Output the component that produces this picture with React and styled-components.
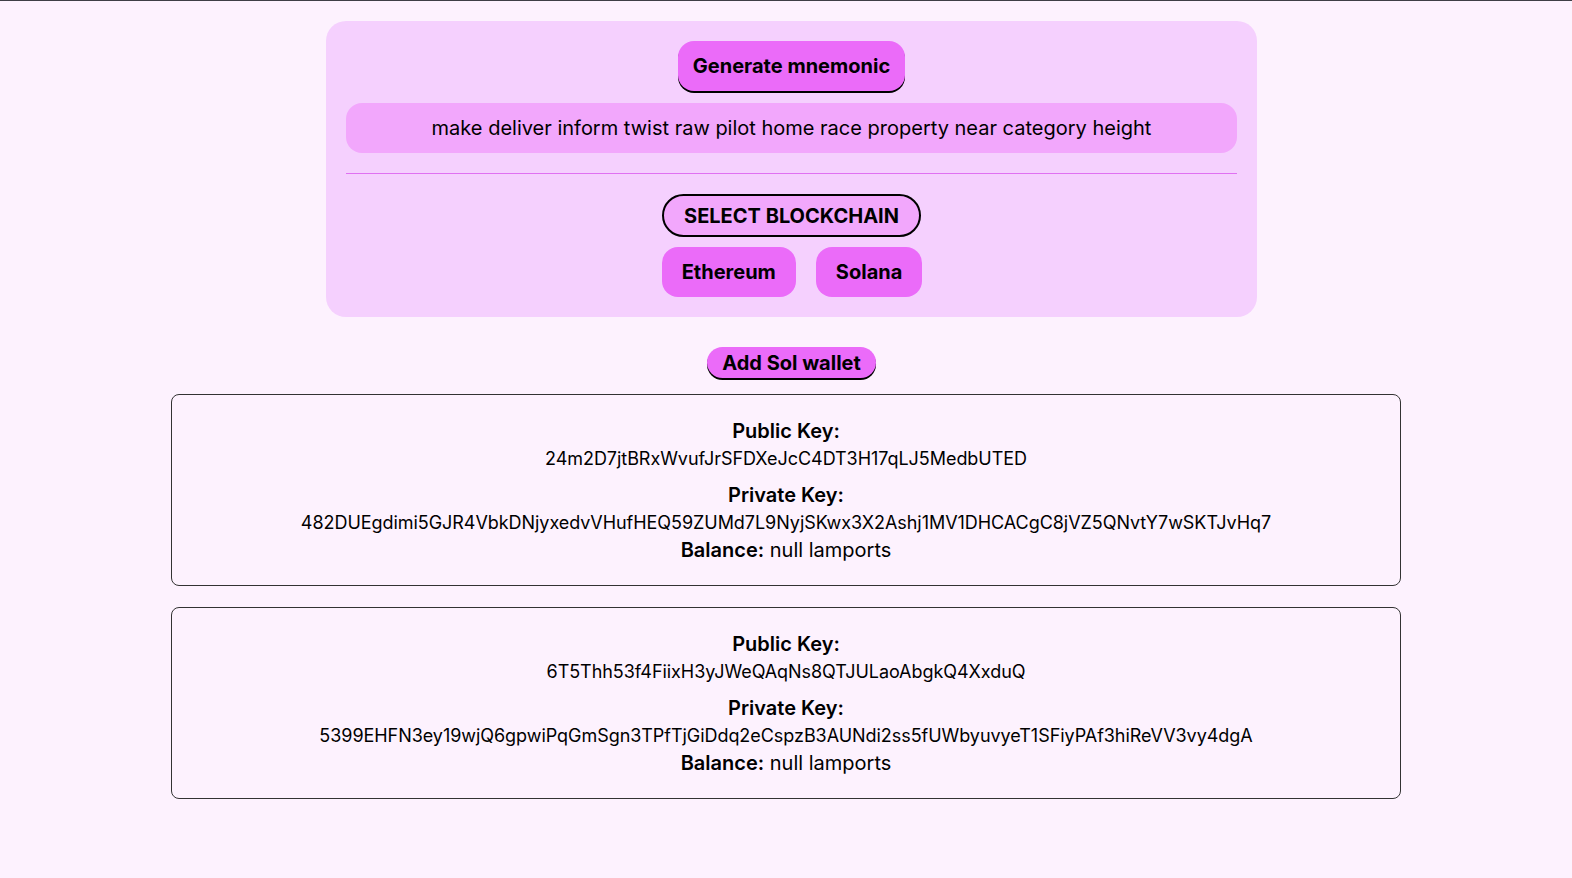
import React from "react";
import styled, { createGlobalStyle } from "styled-components";

const GlobalStyle = createGlobalStyle`
  html, body {
    margin: 0;
    padding: 0;
    background: #fdf2fe;
    font-family: Inter, "Noto Sans", sans-serif;
    color: #000;
  }
`;

const Page = styled.div`
  min-height: 878px;
  box-sizing: border-box;
  border-top: 1px solid #3f3f46;
  display: flex;
  flex-direction: column;
  align-items: center;
  padding-top: 20px;
`;

const Panel = styled.section`
  width: 931px;
  box-sizing: border-box;
  margin-left: 11px;
  padding: 20px;
  border-radius: 20px;
  background: #f5d0fe;
  display: flex;
  flex-direction: column;
  align-items: center;
`;

const PillButton = styled.button`
  font-family: inherit;
  font-weight: 700;
  font-size: 20px;
  color: #000;
  background: #eb6bf9;
  border: none;
  border-radius: ${(p) => p.$radius || "16px"};
  height: ${(p) => p.$height || "50px"};
  padding: 0 ${(p) => p.$padX || "20px"};
  box-shadow: ${(p) => (p.$shadow ? "0 2px 0 #000" : "none")};
  cursor: pointer;
`;

const AddButton = styled(PillButton)`
  margin-left: 11px;
  margin-bottom: -5px;
`;

const Mnemonic = styled.div`
  align-self: stretch;
  margin-top: 12px;
  height: 50px;
  border-radius: 16px;
  background: #f2a7fc;
  display: flex;
  align-items: center;
  justify-content: center;
  font-size: 20px;
`;

const Divider = styled.hr`
  align-self: stretch;
  border: none;
  border-top: 1px solid #e070f2;
  margin: 20px 0 20px;
`;

const SelectLabel = styled.div`
  height: 43px;
  box-sizing: border-box;
  padding: 0 20px;
  border: 2px solid #000;
  border-radius: 999px;
  background: #f2a7fc;
  display: flex;
  align-items: center;
  font-weight: 700;
  font-size: 20px;
`;

const ChainRow = styled.div`
  display: flex;
  gap: 20px;
  margin-top: 10px;
  margin-left: 1px;
`;

const WalletList = styled.div`
  margin-top: 30px;
  display: flex;
  flex-direction: column;
  align-items: center;
  gap: 21px;
`;

const WalletCard = styled.div`
  width: 1230px;
  height: 192px;
  box-sizing: border-box;
  border: 1px solid #333;
  border-radius: 8px;
  display: flex;
  flex-direction: column;
  align-items: center;
  padding-top: 22px;
`;

const Label = styled.div`
  font-weight: 600;
  font-size: 20px;
  line-height: 28px;
`;

const KeyText = styled.div`
  font-size: 18px;
  line-height: 28px;
  letter-spacing: -0.05px;
  margin-bottom: 8px;
`;

const Balance = styled.div`
  font-size: 20px;
  line-height: 28px;
  margin-top: -9px;
  b {
    font-weight: 600;
  }
`;

const wallets = [
  {
    pub: "24m2D7jtBRxWvufJrSFDXeJcC4DT3H17qLJ5MedbUTED",
    priv: "482DUEgdimi5GJR4VbkDNjyxedvVHufHEQ59ZUMd7L9NyjSKwx3X2Ashj1MV1DHCACgC8jVZ5QNvtY7wSKTJvHq7",
  },
  {
    pub: "6T5Thh53f4FiixH3yJWeQAqNs8QTJULaoAbgkQ4XxduQ",
    priv: "5399EHFN3ey19wjQ6gpwiPqGmSgn3TPfTjGiDdq2eCspzB3AUNdi2ss5fUWbyuvyeT1SFiyPAf3hiReVV3vy4dgA",
  },
];

export default function App() {
  return (
    <>
      <GlobalStyle />
      <Page>
        <Panel>
          <PillButton $shadow $height="50px" $padX="15px">
            Generate mnemonic
          </PillButton>
          <Mnemonic>
            make deliver inform twist raw pilot home race property near category height
          </Mnemonic>
          <Divider />
          <SelectLabel>SELECT BLOCKCHAIN</SelectLabel>
          <ChainRow>
            <PillButton>Ethereum</PillButton>
            <PillButton>Solana</PillButton>
          </ChainRow>
        </Panel>
        <WalletList>
          <AddButton $shadow $height="31px" $radius="999px" $padX="15px">
            Add Sol wallet
          </AddButton>
          {wallets.map((w) => (
            <WalletCard key={w.pub}>
              <Label>Public Key:</Label>
              <KeyText>{w.pub}</KeyText>
              <Label>Private Key:</Label>
              <KeyText>{w.priv}</KeyText>
              <Balance>
                <b>Balance:</b> null lamports
              </Balance>
            </WalletCard>
          ))}
        </WalletList>
      </Page>
    </>
  );
}
